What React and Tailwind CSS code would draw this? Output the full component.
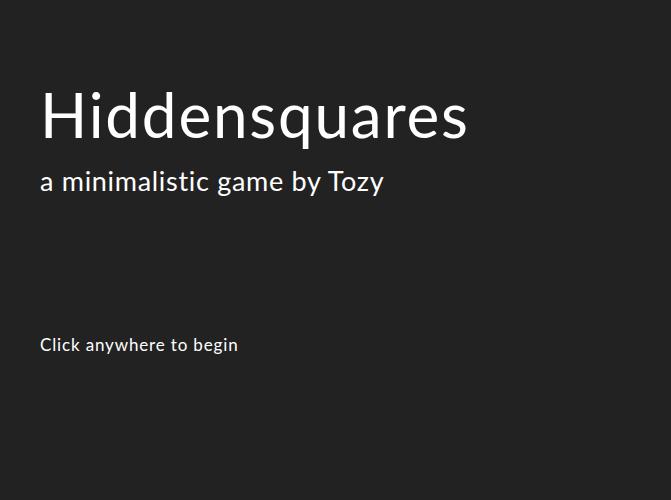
import React from "react";

const App = () => {
  return (
    <div
      className="w-full h-[500px] bg-[#222222] text-white px-10 cursor-pointer select-none"
      style={{ fontFamily: "Lato, 'Noto Sans', sans-serif" }}
    >
      {/* Title block */}
      <div className="pt-[76px]">
        <h1 className="text-[62px] leading-[76px] font-normal tracking-[1.8px]">
          Hiddensquares
        </h1>
        <p className="text-[27px] leading-[36px] font-normal mt-[11px] tracking-[0.7px]">
          a minimalistic game by Tozy
        </p>
      </div>

      {/* Prompt */}
      <p className="mt-[134px] text-[17px] leading-[24px] font-normal tracking-[0.85px]">
        Click anywhere to begin
      </p>
    </div>
  );
};

export default App;
